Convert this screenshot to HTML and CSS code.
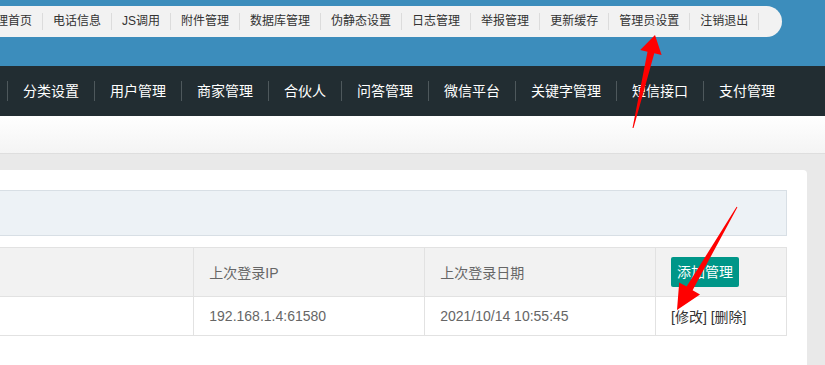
FILE: index.html
```html
<!DOCTYPE html>
<html lang="zh-CN">
<head>
  <meta charset="UTF-8">
  <title>管理员设置</title>
  <link rel="stylesheet" href="styles.css">
</head>
<body>
  <div class="top-bar">
    <ul class="top-menu">
      <li>管理首页</li>
      <li>电话信息</li>
      <li>JS调用</li>
      <li>附件管理</li>
      <li>数据库管理</li>
      <li>伪静态设置</li>
      <li>日志管理</li>
      <li>举报管理</li>
      <li>更新缓存</li>
      <li>管理员设置</li>
      <li>注销退出</li>
    </ul>
  </div>
  <div class="main-nav">
    <ul>
      <li>分类设置</li>
      <li>用户管理</li>
      <li>商家管理</li>
      <li>合伙人</li>
      <li>问答管理</li>
      <li>微信平台</li>
      <li>关键字管理</li>
      <li>短信接口</li>
      <li>支付管理</li>
    </ul>
  </div>
  <div class="sub-bar"></div>
  <div class="content">
    <div class="card">
      <div class="notice"></div>
      <table class="admin-table">
        <tr class="head">
          <td class="col-name"></td>
          <td class="col-ip">上次登录IP</td>
          <td class="col-date">上次登录日期</td>
          <td class="col-op"><span class="btn">添加管理</span></td>
        </tr>
        <tr>
          <td class="col-name"></td>
          <td>192.168.1.4:61580</td>
          <td>2021/10/14 10:55:45</td>
          <td class="ops"><a href="#">[修改]</a> <a href="#">[删除]</a></td>
        </tr>
      </table>
    </div>
  </div>

  <svg class="arrows" width="825" height="365" viewBox="0 0 825 365">
    <polygon fill="#ff0000" points="655,35 661.6,55 654.3,53.3 633.5,128.1 632.5,127.9 647.5,51.7 640.2,50"/>
    <polygon fill="#ff0000" points="677,310 679.2,282.4 686.6,286.6 736.6,206.8 737.4,207.2 692.6,290.2 700,294.4"/>
  </svg>
</body>
</html>
```

FILE: styles.css
```css
body {
  margin: 0;
  width: 825px;
  height: 365px;
  overflow: hidden;
  font-family: 'Liberation Sans', 'Noto Sans CJK SC', sans-serif;
  background-color: #e9e9e9;
  position: relative;
}
ul {
  list-style: none;
  margin: 0;
  padding: 0;
}
.top-bar {
  background-color: #3c8dbc;
  height: 66px;
  padding-top: 6px;
  box-sizing: border-box;
}
.top-menu {
  display: flex;
  width: max-content;
  margin-left: -26px;
  padding-right: 23px;
  background-color: #f2f2f2;
  border-radius: 0 16px 16px 0;
}
.top-menu li {
  margin: 7px 0;
  padding: 0 10px;
  line-height: 17px;
  font-size: 12px;
  color: #333;
  border-right: 1px solid #dcdcdc;
}
.main-nav {
  background-color: #222d32;
  height: 50px;
}
.main-nav ul {
  display: flex;
  padding-left: 7px;
}
.main-nav li {
  margin: 15px 0;
  padding: 0 15px;
  line-height: 20px;
  font-size: 14px;
  color: #fff;
  border-left: 1px solid #4e585c;
}
.sub-bar {
  height: 37px;
  background: linear-gradient(#ffffff, #f4f4f4);
  border-bottom: 1px solid #dedede;
}
.content {
  padding-top: 16px;
}
.card {
  margin: 0 18px 0 -300px;
  padding: 20px 20px 40px;
  background-color: #fff;
  border-radius: 4px;
}
.notice {
  height: 44px;
  background-color: #edf2f6;
  border: 1px solid #d8dfe5;
  margin-bottom: 11px;
}
.admin-table {
  width: 100%;
  border-collapse: collapse;
  font-size: 14px;
  color: #666;
}
.admin-table td {
  border: 1px solid #e2e2e2;
  padding: 0 15px;
  height: 38px;
  white-space: nowrap;
}
.admin-table tr.head td {
  background-color: #f2f2f2;
  height: 48px;
}
.col-name { width: 443px; }
.col-ip { width: 200px; }
.col-date { width: 200px; }
.col-op { width: 100px; }
.btn {
  display: inline-block;
  background-color: #009688;
  color: #fff;
  height: 30px;
  line-height: 30px;
  padding: 0 6px;
  border-radius: 2px;
}
.ops a {
  color: #333;
  text-decoration: none;
}
.arrows {
  position: absolute;
  left: 0;
  top: 0;
  pointer-events: none;
}
```
